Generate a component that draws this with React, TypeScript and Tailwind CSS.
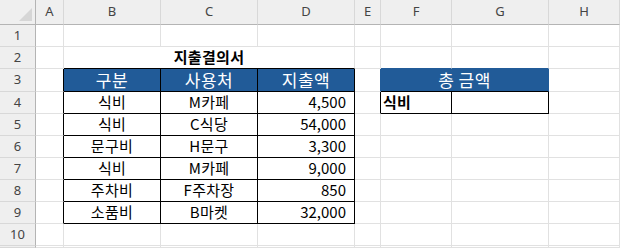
import React from "react"

const cols = ["A", "B", "C", "D", "E", "F", "G", "H"]

const grid = "border-[#e1e1e1]"
const blue = "bg-[#215b98]"
const kr = { fontFamily: '"Noto Sans CJK KR", sans-serif' }

const rows = [
  { gubun: "식비", place: "M카페", amount: "4,500" },
  { gubun: "식비", place: "C식당", amount: "54,000" },
  { gubun: "문구비", place: "H문구", amount: "3,300" },
  { gubun: "식비", place: "M카페", amount: "9,000" },
  { gubun: "주차비", place: "F주차장", amount: "850" },
  { gubun: "소품비", place: "B마켓", amount: "32,000" },
]

function RowHead({ n }: { n?: number }) {
  return (
    <div className="flex items-center justify-center border-r border-b border-r-[#b4b4b4] border-b-[#d8d8d8] bg-[#efefef] text-[13px] text-[#444]">
      {n}
    </div>
  )
}

function Cell({ className = "", children }: { className?: string; children?: React.ReactNode }) {
  return <div className={`flex items-center border-r border-b ${grid} ${className}`}>{children}</div>
}

export default function App() {
  return (
    <div
      className="h-[248px] w-[620px] overflow-hidden bg-white text-black"
      style={{ fontFamily: '"Noto Sans", "Noto Sans CJK KR", sans-serif' }}
    >
      <div className="grid h-[248px] grid-cols-[36px_28px_97px_97px_97px_26px_71px_97px_1fr] grid-rows-[25px_22px_22px_23px_repeat(7,22px)_1fr]">
        {/* column headers */}
        <div className="relative border-r border-b border-r-[#b4b4b4] border-b-[#b4b4b4] bg-[#efefef]">
          <svg className="absolute right-[3px] bottom-[3px]" width="13" height="13" viewBox="0 0 13 13">
            <polygon points="13,0 13,13 0,13" fill="#d6d6d6" />
          </svg>
        </div>
        {cols.map((c) => (
          <div
            key={c}
            className="flex items-center justify-center border-r border-b border-r-[#d8d8d8] border-b-[#b4b4b4] bg-[#efefef] text-[13px] text-[#444]"
          >
            {c}
          </div>
        ))}

        {/* row 1 */}
        <RowHead n={1} />
        {cols.map((c) => (
          <Cell key={c} />
        ))}

        {/* row 2 */}
        <RowHead n={2} />
        <Cell />
        <Cell className="col-span-3 justify-center border-b-black text-[15px] font-bold tracking-[0.3px]">
          <span style={kr}>지출결의서</span>
        </Cell>
        <Cell />
        <Cell className="border-b-[#215b98]" />
        <Cell className="border-b-[#215b98]" />
        <Cell />

        {/* row 3 */}
        <RowHead n={3} />
        <Cell className="border-r-black" />
        {["구분", "사용처", "지출액"].map((t) => (
          <Cell key={t} className={`${blue} justify-center border-r-black border-b-black text-[17px] tracking-[0.5px] text-white`}>
            <span style={kr}>{t}</span>
          </Cell>
        ))}
        <Cell className="border-r-[#215b98]" />
        <Cell className={`${blue} col-span-2 justify-center border-r-[#215b98] border-b-black text-[17px] tracking-[0.5px] text-white`}>
          <span style={kr}>총 금액</span>
        </Cell>
        <Cell />

        {/* rows 4 - 9 */}
        {rows.map((r, i) => (
          <React.Fragment key={i}>
            <RowHead n={i + 4} />
            <Cell className="border-r-black" />
            <Cell className="justify-center border-r-black border-b-black text-[15px] tracking-[0.3px]">
              <span style={kr}>{r.gubun}</span>
            </Cell>
            <Cell className="justify-center border-r-black border-b-black text-[15px] tracking-[0.3px]">
              <span style={kr}>{r.place}</span>
            </Cell>
            <Cell className="justify-end border-r-black border-b-black pr-[8px] text-[15px]">
              <span style={kr}>{r.amount}</span>
            </Cell>
            {i === 0 ? (
              <>
                <Cell className="border-r-black" />
                <Cell className="border-r-black border-b-black pl-[2px] text-[15px] font-bold tracking-[0.3px]">
                  <span style={kr}>식비</span>
                </Cell>
                <Cell className="border-r-black border-b-black" />
              </>
            ) : (
              <>
                <Cell />
                <Cell />
                <Cell />
              </>
            )}
            <Cell />
          </React.Fragment>
        ))}

        {/* row 10 */}
        <RowHead n={10} />
        {cols.map((c) => (
          <Cell key={c} />
        ))}

        {/* row 11, only its top edge shows */}
        <RowHead />
        {cols.map((c) => (
          <Cell key={c} />
        ))}
      </div>
    </div>
  )
}
